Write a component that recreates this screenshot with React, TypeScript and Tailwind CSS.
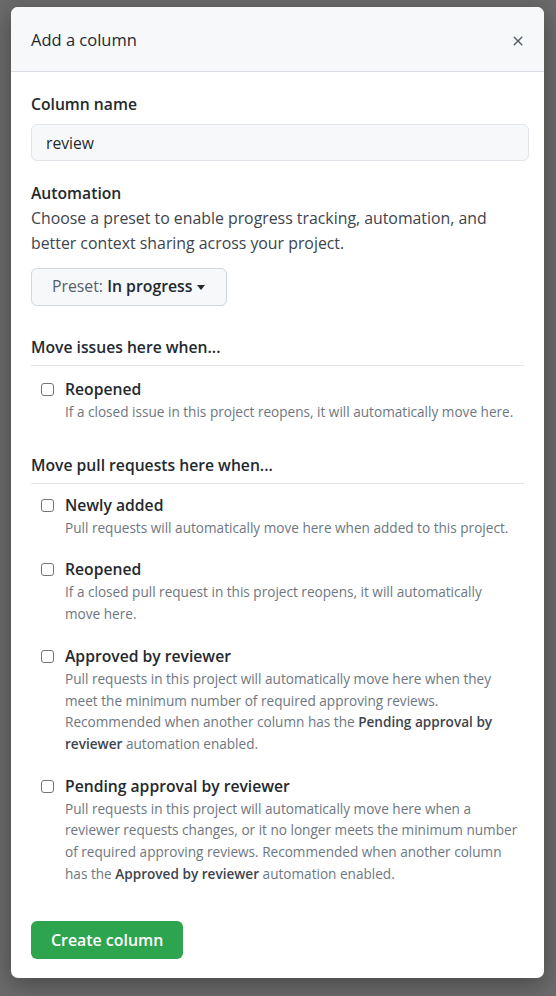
import { useState } from "react";

type Option = {
  id: string;
  label: string;
  lines: React.ReactNode[];
};

const issueOptions: Option[] = [
  {
    id: "issue-reopened",
    label: "Reopened",
    lines: ["If a closed issue in this project reopens, it will automatically move here."],
  },
];

const prOptions: Option[] = [
  {
    id: "pr-added",
    label: "Newly added",
    lines: ["Pull requests will automatically move here when added to this project."],
  },
  {
    id: "pr-reopened",
    label: "Reopened",
    lines: [
      "If a closed pull request in this project reopens, it will automatically",
      "move here.",
    ],
  },
  {
    id: "pr-approved",
    label: "Approved by reviewer",
    lines: [
      "Pull requests in this project will automatically move here when they",
      "meet the minimum number of required approving reviews.",
      <>
        Recommended when another column has the{" "}
        <b className="font-semibold text-[#3d444d]">Pending approval by</b>
      </>,
      <>
        <b className="font-semibold text-[#3d444d]">reviewer</b> automation enabled.
      </>,
    ],
  },
  {
    id: "pr-pending",
    label: "Pending approval by reviewer",
    lines: [
      "Pull requests in this project will automatically move here when a",
      "reviewer requests changes, or it no longer meets the minimum number",
      "of required approving reviews. Recommended when another column",
      <>
        has the <b className="font-semibold text-[#3d444d]">Approved by reviewer</b> automation enabled.
      </>,
    ],
  },
];

function CheckOption({
  option,
  checked,
  onToggle,
}: {
  option: Option;
  checked: boolean;
  onToggle: () => void;
}) {
  return (
    <label className="flex items-start gap-[11px] pl-[10px] cursor-pointer">
      <input
        type="checkbox"
        checked={checked}
        onChange={onToggle}
        className="mt-[6px] h-[13px] w-[13px] shrink-0 appearance-none rounded-[3px] border border-[#6e7781] bg-white checked:bg-[#0969da] checked:border-[#0969da]"
      />
      <div>
        <div className="text-[15.7px] font-semibold leading-[24px] text-[#24292f]">
          {option.label}
        </div>
        <div className="text-[13.6px] leading-[21.7px] text-[#6e7781] whitespace-nowrap">
          {option.lines.map((line, i) => (
            <div key={i}>{line}</div>
          ))}
        </div>
      </div>
    </label>
  );
}

export default function App() {
  const [name, setName] = useState("review");
  const [checked, setChecked] = useState<Record<string, boolean>>({});

  const toggle = (id: string) =>
    setChecked((prev) => ({ ...prev, [id]: !prev[id] }));

  return (
    <div
      className="min-h-[996px] w-full bg-[#6b6b6b] pt-[7px] pl-[11px]"
      style={{ fontFamily: '"Open Sans", "Noto Sans", sans-serif' }}
    >
      <div className="w-[533px] h-[971px] rounded-[7px] bg-white shadow-[0_6px_24px_rgba(0,0,0,0.35)] overflow-hidden flex flex-col">
        <div className="flex h-[65px] shrink-0 items-center justify-between border-b border-[#d8dee4] bg-[#f6f8fa] pt-[3px] pl-[20px] pr-[18px]">
          <h2 className="text-[16.5px] font-medium text-[#24292f]">Add a column</h2>
          <button className="text-[#57606a]" aria-label="Close">
            <svg width="16" height="16" viewBox="0 0 16 16" fill="currentColor">
              <path d="M3.72 3.72a.75.75 0 0 1 1.06 0L8 6.94l3.22-3.22a.75.75 0 1 1 1.06 1.06L9.06 8l3.22 3.22a.75.75 0 1 1-1.06 1.06L8 9.06l-3.22 3.22a.75.75 0 0 1-1.06-1.06L6.94 8 3.72 4.78a.75.75 0 0 1 0-1.06Z" />
            </svg>
          </button>
        </div>

        <div className="px-[20px] pt-[19px]">
          <label className="block text-[15.7px] font-semibold leading-[26px] text-[#24292f]">
            Column name
          </label>
          <input
            value={name}
            onChange={(e) => setName(e.target.value)}
            className="mt-[7px] h-[37px] w-[498px] rounded-[6px] border border-[#e1e4e8] bg-[#f6f8fa] px-[14px] text-[15.7px] text-[#24292f] outline-none"
          />

          <div className="mt-[19px] text-[15.7px] font-semibold leading-[26px] text-[#24292f]">
            Automation
          </div>
          <p className="text-[15.85px] leading-[25px] text-[#3d444d]">
            Choose a preset to enable progress tracking, automation, and
            <br />
            better context sharing across your project.
          </p>

          <button className="mt-[12px] flex h-[38px] items-center gap-[5px] rounded-[6px] border border-[#d0d7de] bg-[#f6f8fa] pl-[20px] pr-[21px] text-[15.8px] text-[#57606a]">
            <span>
              Preset: <span className="font-semibold text-[#24292f]">In progress</span>
            </span>
            <svg width="8" height="5" viewBox="0 0 8 5" className="text-[#24292f]">
              <path d="M0 0h8L4 5z" fill="currentColor" />
            </svg>
          </button>

          <div className="mt-[29px] border-b border-[#e1e4e8] pb-[6px] text-[15.7px] font-semibold leading-[24px] text-[#24292f]">
            Move issues here when...
          </div>
          <div className="mt-[11px] flex flex-col gap-[19px]">
            {issueOptions.map((o) => (
              <CheckOption key={o.id} option={o} checked={!!checked[o.id]} onToggle={() => toggle(o.id)} />
            ))}
          </div>

          <div className="mt-[30px] border-b border-[#e1e4e8] pb-[6px] text-[15.7px] font-semibold leading-[24px] text-[#24292f]">
            Move pull requests here when...
          </div>
          <div className="mt-[9px] flex flex-col gap-[19px]">
            {prOptions.map((o) => (
              <CheckOption key={o.id} option={o} checked={!!checked[o.id]} onToggle={() => toggle(o.id)} />
            ))}
          </div>

          <button className="mt-[37px] h-[38px] rounded-[6px] bg-[#2da44e] px-[20px] text-[15.9px] font-semibold text-white">
            Create column
          </button>
        </div>
      </div>
    </div>
  );
}
